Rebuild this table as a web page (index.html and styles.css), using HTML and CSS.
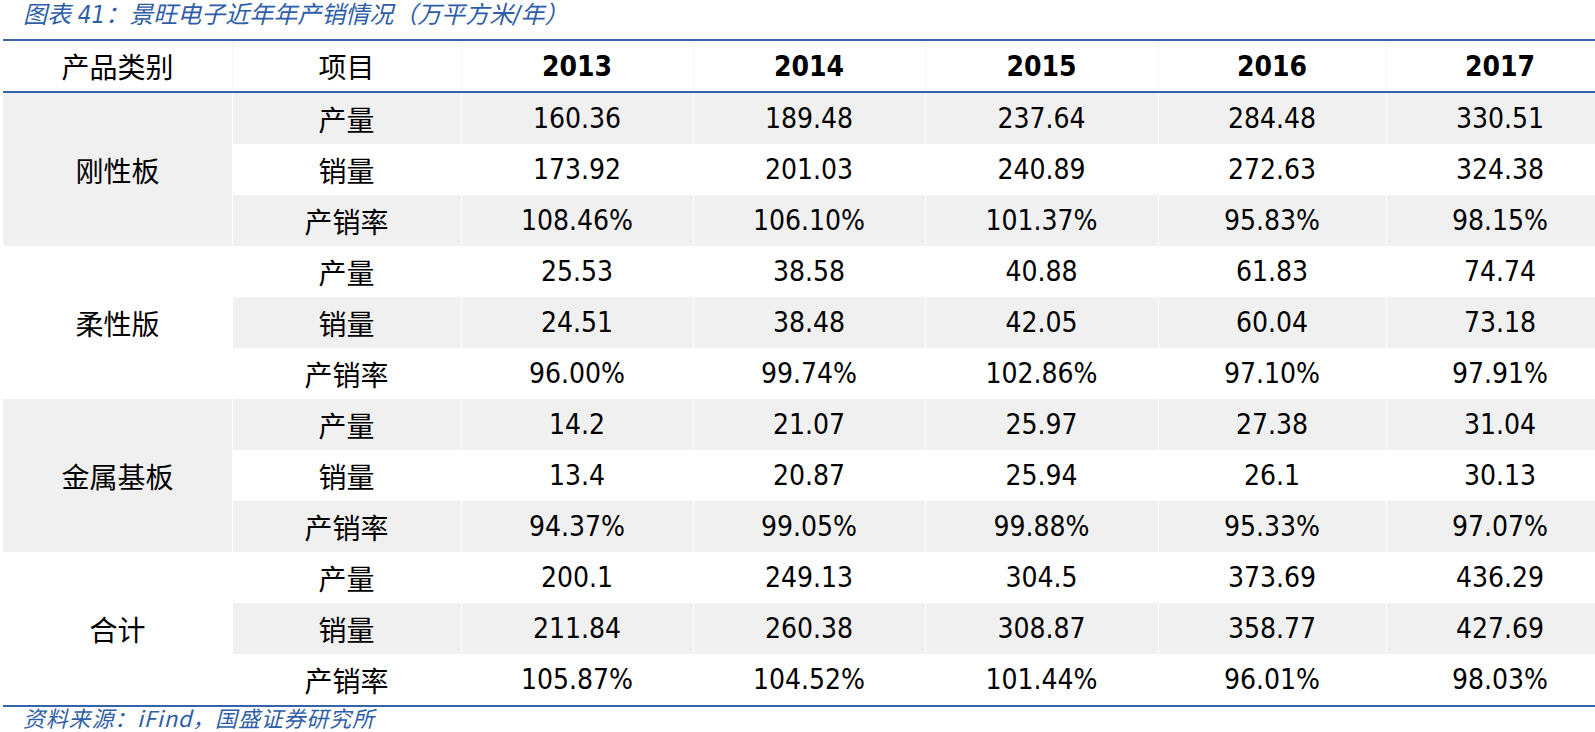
FILE: index.html
```html
<!DOCTYPE html>
<html lang="zh-CN">
<head>
<meta charset="utf-8">
<title>景旺电子近年年产销情况</title>
<link rel="stylesheet" href="styles.css">
</head>
<body>
<div class="page">
  <div class="title">图表 41：景旺电子近年年产销情况（万平方米/年）</div>
  <div class="table">
    <div class="head">
      <div class="cell">产品类别</div>
      <div class="cell">项目</div>
      <div class="cell year">2013</div>
      <div class="cell year">2014</div>
      <div class="cell year">2015</div>
      <div class="cell year">2016</div>
      <div class="cell year">2017</div>
    </div>
    <div class="body">
      <div class="cell cat gray">刚性板</div>
      <div class="cell gray">产量</div><div class="cell gray">160.36</div><div class="cell gray">189.48</div><div class="cell gray">237.64</div><div class="cell gray">284.48</div><div class="cell gray">330.51</div>
      <div class="cell">销量</div><div class="cell">173.92</div><div class="cell">201.03</div><div class="cell">240.89</div><div class="cell">272.63</div><div class="cell">324.38</div>
      <div class="cell gray">产销率</div><div class="cell gray">108.46%</div><div class="cell gray">106.10%</div><div class="cell gray">101.37%</div><div class="cell gray">95.83%</div><div class="cell gray">98.15%</div>

      <div class="cell cat">柔性版</div>
      <div class="cell">产量</div><div class="cell">25.53</div><div class="cell">38.58</div><div class="cell">40.88</div><div class="cell">61.83</div><div class="cell">74.74</div>
      <div class="cell gray">销量</div><div class="cell gray">24.51</div><div class="cell gray">38.48</div><div class="cell gray">42.05</div><div class="cell gray">60.04</div><div class="cell gray">73.18</div>
      <div class="cell">产销率</div><div class="cell">96.00%</div><div class="cell">99.74%</div><div class="cell">102.86%</div><div class="cell">97.10%</div><div class="cell">97.91%</div>

      <div class="cell cat gray">金属基板</div>
      <div class="cell gray">产量</div><div class="cell gray">14.2</div><div class="cell gray">21.07</div><div class="cell gray">25.97</div><div class="cell gray">27.38</div><div class="cell gray">31.04</div>
      <div class="cell">销量</div><div class="cell">13.4</div><div class="cell">20.87</div><div class="cell">25.94</div><div class="cell">26.1</div><div class="cell">30.13</div>
      <div class="cell gray">产销率</div><div class="cell gray">94.37%</div><div class="cell gray">99.05%</div><div class="cell gray">99.88%</div><div class="cell gray">95.33%</div><div class="cell gray">97.07%</div>

      <div class="cell cat">合计</div>
      <div class="cell">产量</div><div class="cell">200.1</div><div class="cell">249.13</div><div class="cell">304.5</div><div class="cell">373.69</div><div class="cell">436.29</div>
      <div class="cell gray">销量</div><div class="cell gray">211.84</div><div class="cell gray">260.38</div><div class="cell gray">308.87</div><div class="cell gray">358.77</div><div class="cell gray">427.69</div>
      <div class="cell">产销率</div><div class="cell">105.87%</div><div class="cell">104.52%</div><div class="cell">101.44%</div><div class="cell">96.01%</div><div class="cell">98.03%</div>
    </div>
  </div>
  <div class="source">资料来源：iFind，国盛证券研究所</div>
</div>
</body>
</html>
```

FILE: styles.css
```css
html, body {
  margin: 0;
  padding: 0;
  overflow: hidden;
  background: #ffffff;
}

.page {
  width: 1614px;
  padding-left: 3px;
}

.title {
  height: 39px;
  line-height: 31px;
  padding-left: 20px;
  font-family: "DejaVu Sans Condensed", "DejaVu Sans", "Noto Sans CJK SC", sans-serif;
  font-stretch: condensed;
  font-style: italic;
  font-size: 24px;
  color: #2f5ea8;
  box-sizing: border-box;
}

.table {
  width: 1611px;
  border-top: 2px solid #3563ab;
  border-bottom: 2px solid #3563ab;
  font-family: "DejaVu Sans Condensed", "DejaVu Sans", "Noto Sans CJK SC", sans-serif;
  font-stretch: condensed;
  font-size: 28px;
  color: #000;
}

.head,
.body {
  display: grid;
  grid-template-columns: 229px 229px 232px 232px 233px 228px 228px;
}

.head {
  grid-template-rows: 50px;
  border-bottom: 2px solid #3563ab;
}

.body {
  grid-template-rows: repeat(12, 51px);
}

.cell {
  display: flex;
  align-items: center;
  justify-content: center;
  white-space: nowrap;
  box-shadow: inset 1px 0 0 #ffffff;
}

.head .cell {
  box-shadow: inset 1px 0 0 #f6f6f6;
}

.head .cell:first-child {
  box-shadow: none;
}

.year {
  font-weight: bold;
}

.gray {
  background: #f0f0f0;
}

.cat {
  grid-row: span 3;
  box-shadow: none;
}

.source {
  padding-left: 20px;
  font-family: "Noto Sans CJK SC", sans-serif;
  font-style: italic;
  font-size: 22px;
  letter-spacing: 0.8px;
  line-height: 20px;
  height: 22px;
  margin-top: 0;
  color: #2f5ea8;
}
```
